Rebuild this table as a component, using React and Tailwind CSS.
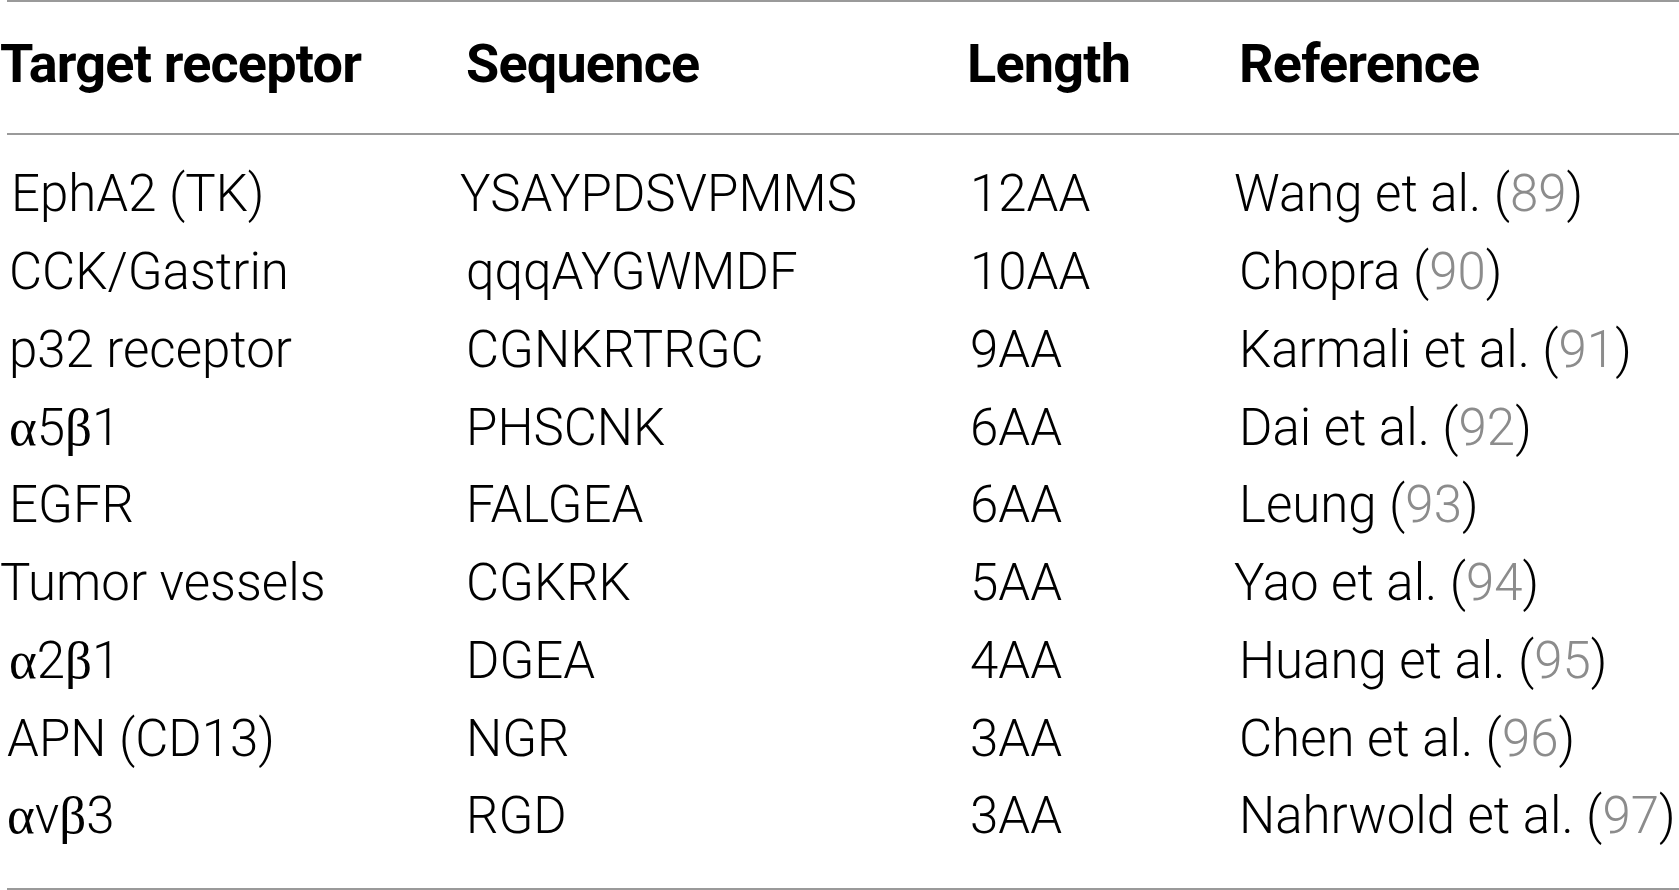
const rows = [
  { target: "EphA2 (TK)", t: "pl-[11px]", seq: "YSAYPDSVPMMS", s: "pl-0", len: "12AA", ref: "Wang et al.", r: "pl-0", num: "89" },
  { target: "CCK/Gastrin", t: "pl-[9px]", seq: "qqqAYGWMDF", s: "pl-[6px]", len: "10AA", ref: "Chopra", r: "pl-[5px]", num: "90" },
  { target: "p32 receptor", t: "pl-[9px]", seq: "CGNKRTRGC", s: "pl-[6px]", len: "9AA", ref: "Karmali et al.", r: "pl-[5px]", num: "91" },
  { target: ["α", "5", "β", "1"], t: "pl-[9px]", seq: "PHSCNK", s: "pl-[6px]", len: "6AA", ref: "Dai et al.", r: "pl-[5px]", num: "92" },
  { target: "EGFR", t: "pl-[9px]", seq: "FALGEA", s: "pl-[6px]", len: "6AA", ref: "Leung", r: "pl-[5px]", num: "93" },
  { target: "Tumor vessels", t: "pl-0", seq: "CGKRK", s: "pl-[6px]", len: "5AA", ref: "Yao et al.", r: "pl-0", num: "94" },
  { target: ["α", "2", "β", "1"], t: "pl-[9px]", seq: "DGEA", s: "pl-[6px]", len: "4AA", ref: "Huang et al.", r: "pl-[5px]", num: "95" },
  { target: "APN (CD13)", t: "pl-[7px]", seq: "NGR", s: "pl-[6px]", len: "3AA", ref: "Chen et al.", r: "pl-[5px]", num: "96" },
  { target: ["α", "v", "β", "3"], t: "pl-[7px]", seq: "RGD", s: "pl-[6px]", len: "3AA", ref: "Nahrwold et al.", r: "pl-[5px]", num: "97" },
];

// greek letters are set in a serif face in the source table
const Target = ({ value }) => {
  if (typeof value === "string") return value;
  return value.map((ch, i) =>
    i % 2 === 0 ? (
      <span key={i} className="font-['Liberation_Serif',serif] font-normal text-[53px]">{ch}</span>
    ) : (
      <span key={i}>{ch}</span>
    )
  );
};

const App = () => {
  return (
    <div className="w-[1679px] h-[890px] bg-white text-black font-['Roboto','Liberation_Sans',sans-serif] overflow-hidden">
      <div className="ml-[7px] border-t-2 border-[#9a9a9a]" />

      {/* header */}
      <div className="grid grid-cols-[460px_507px_267px_1fr] h-[131px] items-center pb-[8px] text-[54px] font-bold tracking-[-0.015em]">
        <div className="whitespace-nowrap">Target receptor</div>
        <div className="pl-[6px]">Sequence</div>
        <div>Length</div>
        <div className="pl-[5px]">Reference</div>
      </div>
      <div className="ml-[7px] border-t-2 border-[#9a9a9a]" />

      {/* body */}
      <div className="pt-[20px] pb-[33px]">
        {rows.map((row) => (
          <div key={row.seq} className="grid grid-cols-[460px_507px_267px_1fr] h-[77.75px] items-center text-[51px] font-light leading-none whitespace-nowrap">
            <div className={row.t}><Target value={row.target} /></div>
            <div className={row.s}>{row.seq}</div>
            <div className="pl-[3px]">{row.len}</div>
            <div className={row.r}>
              {row.ref} (<span className="text-[#8c8c8c]">{row.num}</span>)
            </div>
          </div>
        ))}
      </div>
      <div className="ml-[7px] border-t-2 border-[#9a9a9a]" />
    </div>
  );
};

export default App;
